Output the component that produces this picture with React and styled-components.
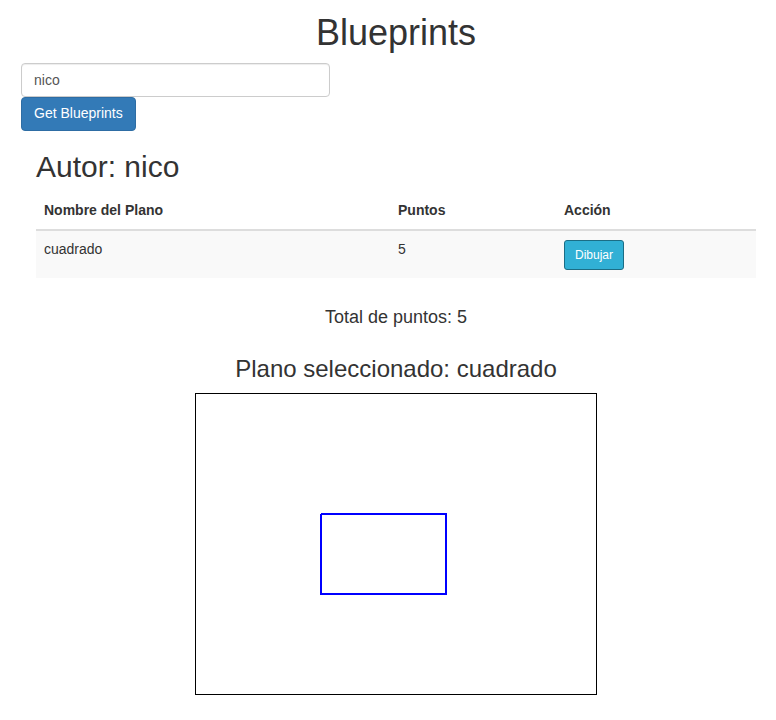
import React, { useState } from "react";
import styled, { createGlobalStyle } from "styled-components";

const GlobalStyle = createGlobalStyle`
  html, body {
    margin: 0;
    padding: 0;
    background: #fff;
  }
  body {
    font-family: "Liberation Sans", Arial, Helvetica, sans-serif;
    font-size: 14px;
    line-height: 1.42857;
    color: #333;
  }
  * {
    box-sizing: border-box;
  }
`;

const blueprints = [{ name: "cuadrado", points: 5 }];

const squarePoints = [
  [125, 120],
  [250, 120],
  [250, 200],
  [125, 200],
  [125, 120],
];

const Page = styled.div`
  padding: 13px 0 20px 16px;
`;

const Title = styled.h1`
  margin: 0 0 10px;
  font-size: 36px;
  font-weight: 500;
  line-height: 1.1;
  text-align: center;
`;

const SearchForm = styled.form`
  display: flex;
  flex-direction: column;
  align-items: flex-start;
  margin-left: 5px;
`;

const AuthorInput = styled.input`
  width: 309px;
  height: 34px;
  padding: 6px 12px;
  font-family: inherit;
  font-size: 14px;
  color: #555;
  border: 1px solid #ccc;
  border-radius: 4px;
  box-shadow: inset 0 1px 1px rgba(0, 0, 0, 0.075);
  outline: 0;
`;

const PrimaryButton = styled.button`
  height: 34px;
  padding: 6px 12px;
  font-family: inherit;
  font-size: 14px;
  line-height: 1.42857;
  color: #fff;
  background-color: #337ab7;
  border: 1px solid #2e6da4;
  border-radius: 4px;
  cursor: pointer;
`;

const Content = styled.div`
  margin: 0 20px;
`;

const Author = styled.h2`
  margin: 19px 0 10px;
  font-size: 30px;
  font-weight: 500;
  line-height: 1.1;
`;

const Table = styled.table`
  width: 100%;
  border-collapse: collapse;
  border-spacing: 0;
  margin-bottom: 20px;
`;

const Th = styled.th`
  width: ${(p) => p.$w || "auto"};
  padding: 8px;
  text-align: left;
  vertical-align: bottom;
  font-weight: bold;
  line-height: 1.42857;
  border-bottom: 2px solid #ddd;
`;

const Row = styled.tr`
  background-color: #f9f9f9;
`;

const Td = styled.td`
  padding: 9px 8px 8px;
  vertical-align: top;
  line-height: 1.42857;
`;

const InfoButton = styled.button`
  height: 30px;
  padding: 5px 10px;
  font-family: inherit;
  font-size: 12px;
  line-height: 1.5;
  color: #fff;
  background-color: #31b0d5;
  border: 1px solid #1b6d85;
  border-radius: 3px;
  cursor: pointer;
`;

const Total = styled.h4`
  margin: 30px 0 0;
  font-size: 18px;
  font-weight: 500;
  line-height: 1.1;
  text-align: center;
`;

const Selected = styled.h3`
  margin: 29px 0 10px;
  font-size: 24px;
  font-weight: 500;
  line-height: 1.1;
  text-align: center;
`;

const Board = styled.svg`
  display: block;
  margin: 0 auto;
  border: 1px solid #000;
  background: #fff;
`;

export default function App() {
  const [author, setAuthor] = useState("nico");
  const total = blueprints.reduce((s, b) => s + b.points, 0);

  return (
    <>
      <GlobalStyle />
      <Page>
        <Title>Blueprints</Title>
        <SearchForm onSubmit={(e) => e.preventDefault()}>
          <AuthorInput
            type="text"
            value={author}
            onChange={(e) => setAuthor(e.target.value)}
          />
          <PrimaryButton type="submit">Get Blueprints</PrimaryButton>
        </SearchForm>
        <Content>
          <Author>Autor: nico</Author>
          <Table>
            <thead>
              <tr>
                <Th $w="354px">Nombre del Plano</Th>
                <Th $w="166px">Puntos</Th>
                <Th>Acción</Th>
              </tr>
            </thead>
            <tbody>
              {blueprints.map((b) => (
                <Row key={b.name}>
                  <Td>{b.name}</Td>
                  <Td>{b.points}</Td>
                  <Td>
                    <InfoButton type="button">Dibujar</InfoButton>
                  </Td>
                </Row>
              ))}
            </tbody>
          </Table>
          <Total>Total de puntos: {total}</Total>
          <Selected>Plano seleccionado: cuadrado</Selected>
        </Content>
        <Board width="402" height="302" viewBox="0 0 400 300">
          <polyline
            points={squarePoints.map((p) => p.join(",")).join(" ")}
            fill="none"
            stroke="#0000ff"
            strokeWidth="2"
          />
        </Board>
      </Page>
    </>
  );
}
